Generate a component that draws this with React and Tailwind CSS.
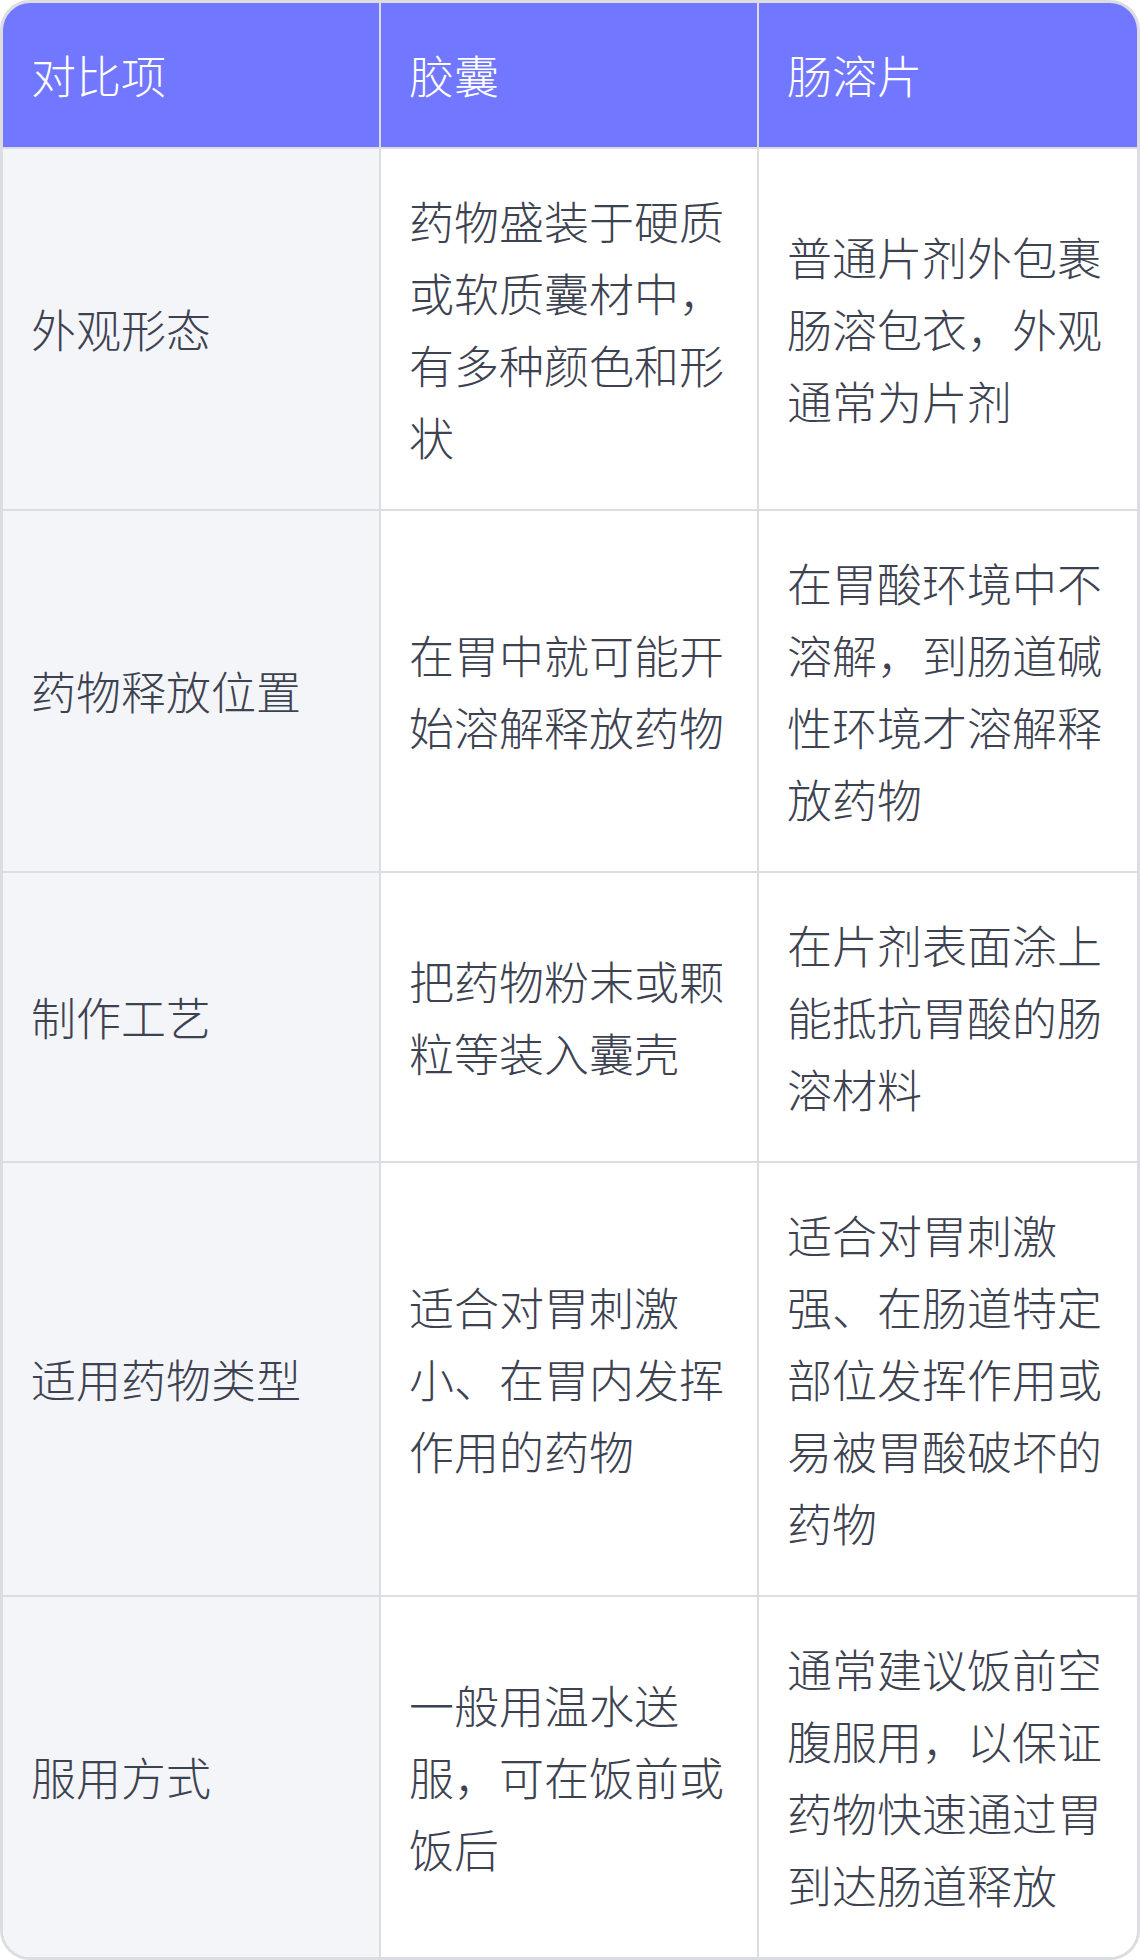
import React from "react";

const rows = [
  ["外观形态", "药物盛装于硬质或软质囊材中，有多种颜色和形状", "普通片剂外包裹肠溶包衣，外观通常为片剂"],
  ["药物释放位置", "在胃中就可能开始溶解释放药物", "在胃酸环境中不溶解，到肠道碱性环境才溶解释放药物"],
  ["制作工艺", "把药物粉末或颗粒等装入囊壳", "在片剂表面涂上能抵抗胃酸的肠溶材料"],
  ["适用药物类型", "适合对胃刺激小、在胃内发挥作用的药物", "适合对胃刺激强、在肠道特定部位发挥作用或易被胃酸破坏的药物"],
  ["服用方式", "一般用温水送服，可在饭前或饭后", "通常建议饭前空腹服用，以保证药物快速通过胃到达肠道释放"],
];

export default function App() {
  return (
    <div
      className="w-[1140px] bg-white"
      style={{ fontFamily: '"Noto Sans CJK SC", "Noto Sans", sans-serif' }}
    >
      <div className="w-[1140px] border-[3px] border-[#dcdde2] rounded-[30px] overflow-hidden">
        <div className="grid grid-cols-3 bg-[#7177ff] text-white text-[45px] leading-[72px] font-light">
          <div className="px-[28px] py-[36px] border-r-2 border-b-2 border-[#dcdde2]">对比项</div>
          <div className="px-[28px] py-[36px] border-r-2 border-b-2 border-[#dcdde2]">胶囊</div>
          <div className="px-[28px] py-[36px] border-b-2 border-[#dcdde2]">肠溶片</div>
        </div>
        {rows.map((r, i) => {
          const last = i === rows.length - 1;
          const bb = last ? "" : "border-b-2";
          return (
            <div key={i} className="grid grid-cols-3 text-[45px] leading-[72px] font-light text-[#3d4251]">
              <div className={`flex items-center px-[28px] py-[36px] bg-[#f4f5f9] border-r-2 border-[#dcdde2] ${bb}`}>
                <span>{r[0]}</span>
              </div>
              <div className={`flex items-center px-[28px] py-[36px] bg-white border-r-2 border-[#dcdde2] ${bb}`}>
                <span>{r[1]}</span>
              </div>
              <div className={`flex items-center px-[28px] py-[36px] bg-white border-[#dcdde2] ${bb}`}>
                <span>{r[2]}</span>
              </div>
            </div>
          );
        })}
      </div>
    </div>
  );
}
